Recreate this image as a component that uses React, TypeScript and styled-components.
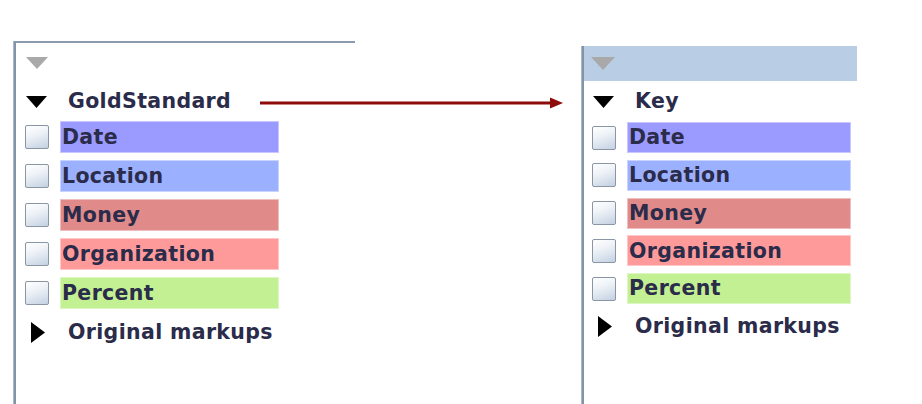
import React from 'react';
import styled, {createGlobalStyle} from 'styled-components';

type Layout = {
  groupHeight: number;
  rowHeight: number;
  rowGap: number;
  inset: number;
  barWidth: number;
  labelOffset: number;
};

const CATEGORIES = [
  {label: 'Date', color: '#9b9bff'},
  {label: 'Location', color: '#9bb0ff'},
  {label: 'Money', color: '#e08a8a'},
  {label: 'Organization', color: '#ff9a9a'},
  {label: 'Percent', color: '#c2f092'},
];

const LEFT: Layout = {
  groupHeight: 39,
  rowHeight: 32,
  rowGap: 7,
  inset: 9,
  barWidth: 219,
  labelOffset: 52,
};

const RIGHT: Layout = {
  groupHeight: 41,
  rowHeight: 31,
  rowGap: 6.8,
  inset: 8,
  barWidth: 224,
  labelOffset: 52,
};

const GlobalStyle = createGlobalStyle`
  html, body {
    margin: 0;
    padding: 0;
    background: #ffffff;
  }
  body {
    font-family: "DejaVu Sans", "Liberation Sans", sans-serif;
  }
`;

const Stage = styled.div`
  position: relative;
  display: flex;
  align-items: flex-start;
  width: 922px;
  height: 404px;
  overflow: hidden;
  background: #ffffff;
`;

const Panel = styled.div<{$left: number; $top: number; $width: number; $topBorder?: boolean}>`
  display: flex;
  flex-direction: column;
  margin-left: ${p => p.$left}px;
  margin-top: ${p => p.$top}px;
  width: ${p => p.$width}px;
  height: ${p => 404 - p.$top}px;
  box-sizing: border-box;
  border-left: 2px solid #8494a8;
  box-shadow: -1px 0 0 #a9b6c6;
  border-top: ${p => (p.$topBorder ? '2px solid #8c9cb0' : 'none')};
  background: #ffffff;
`;

const Header = styled.div<{$height: number; $tint?: boolean; $pad: number}>`
  display: flex;
  align-items: center;
  height: ${p => p.$height}px;
  padding-left: ${p => p.$pad}px;
  background: ${p => (p.$tint ? '#b9cee4' : 'transparent')};
  flex-shrink: 0;
`;

const Tree = styled.div<{$gap: number}>`
  display: flex;
  flex-direction: column;
  gap: ${p => p.$gap}px;
`;

const GroupRow = styled.div<{$height: number; $pad: number}>`
  display: flex;
  align-items: center;
  height: ${p => p.$height}px;
  padding-left: ${p => p.$pad}px;
`;

const Row = styled.div<{$height: number; $pad: number}>`
  display: flex;
  align-items: center;
  height: ${p => p.$height}px;
  padding-left: ${p => p.$pad}px;
`;

const Toggle = styled.span<{$width: number}>`
  display: flex;
  align-items: center;
  width: ${p => p.$width}px;
  flex-shrink: 0;
`;

const Label = styled.span`
  font-size: 20.5px;
  font-weight: bold;
  letter-spacing: 0.35px;
  color: #2b2b4a;
  white-space: nowrap;
  line-height: 1;
`;

const Checkbox = styled.span`
  width: 22px;
  height: 22px;
  flex-shrink: 0;
  border: 1.5px solid #8a96a4;
  border-radius: 2px;
  background: linear-gradient(160deg, #ffffff 0%, #eef2f7 40%, #c3d1e2 100%);
  margin-right: 11px;
`;

const Bar = styled.span<{$color: string; $width: number}>`
  display: flex;
  align-items: center;
  box-sizing: border-box;
  width: ${p => p.$width}px;
  height: 100%;
  padding-left: 1px;
  background: ${p => p.$color};
  border: 1px solid rgba(255, 255, 255, 0.45);
`;

const Arrow = styled.svg`
  position: absolute;
  left: 258px;
  top: 96px;
`;

const DownTriangle = ({color, w, h}: {color: string; w: number; h: number}) => (
  <svg width={w} height={h} viewBox={`0 0 ${w} ${h}`}>
    <polygon points={`0,0 ${w},0 ${w / 2},${h}`} fill={color} />
  </svg>
);

const RightTriangle = () => (
  <svg width={14} height={21} viewBox="0 0 14 21">
    <polygon points="0,0 14,10.5 0,21" fill="#000" />
  </svg>
);

const KeyPanel: React.FC<{
  layout: Layout;
  title: string;
  left: number;
  top: number;
  width: number;
  headerHeight: number;
  tint?: boolean;
}> = ({layout, title, left, top, width, headerHeight, tint}) => (
  <Panel $left={left} $top={top} $width={width} $topBorder={!tint}>
    <Header $height={headerHeight} $tint={tint} $pad={tint ? 7 : 10}>
      <DownTriangle color="#a9a9a9" w={tint ? 24 : 22} h={tint ? 13 : 12} />
    </Header>
    <GroupRow $height={layout.groupHeight} $pad={layout.inset + 1}>
      <Toggle $width={layout.labelOffset - 10}>
        <DownTriangle color="#000" w={21} h={12} />
      </Toggle>
      <Label>{title}</Label>
    </GroupRow>
    <Tree $gap={layout.rowGap}>
      {CATEGORIES.map(c => (
        <Row key={c.label} $height={layout.rowHeight} $pad={layout.inset}>
          <Checkbox />
          <Bar $color={c.color} $width={layout.barWidth}>
            <Label>{c.label}</Label>
          </Bar>
        </Row>
      ))}
      <Row $height={layout.rowHeight} $pad={layout.inset + 6}>
        <Toggle $width={layout.labelOffset - 15}>
          <RightTriangle />
        </Toggle>
        <Label>Original markups</Label>
      </Row>
    </Tree>
  </Panel>
);

export default function App() {
  return (
    <>
      <GlobalStyle />
      <Stage>
        <KeyPanel
          layout={LEFT}
          title="GoldStandard"
          left={14}
          top={41}
          width={341}
          headerHeight={39}
        />
        <KeyPanel
          layout={RIGHT}
          title="Key"
          left={227}
          top={46}
          width={275}
          headerHeight={35}
          tint
        />
        <Arrow width={308} height={14} viewBox="0 0 308 14">
          <line x1="2" y1="7" x2="294" y2="7" stroke="#8e0b0b" strokeWidth="3" />
          <polygon points="292,1.5 305,7 292,12.5" fill="#8e0b0b" />
        </Arrow>
      </Stage>
    </>
  );
}
